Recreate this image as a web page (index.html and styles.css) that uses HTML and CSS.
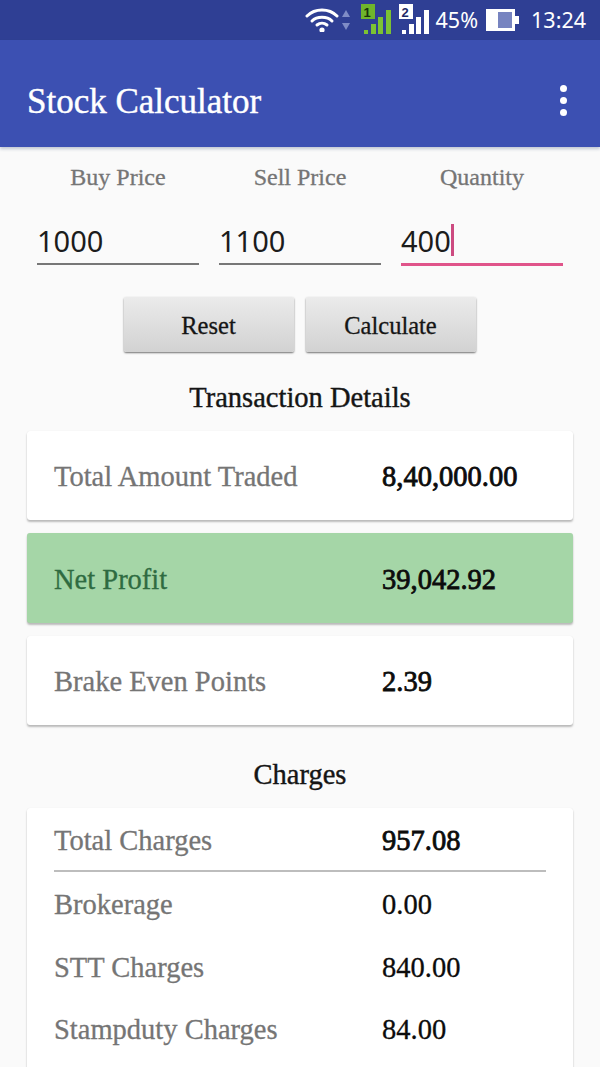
FILE: index.html
```html
<!DOCTYPE html>
<html lang="en">
<head>
<meta charset="utf-8">
<title>Stock Calculator</title>
<link rel="stylesheet" href="styles.css">
</head>
<body>
<div class="screen">
  <div class="status">
    <svg class="ic-wifi" width="34" height="26" viewBox="0 0 34 26"><g fill="none" stroke="#fff" stroke-width="3" stroke-linecap="round"><path d="M2 10C10 2 24 2 32 10"/><path d="M7 15C12 10 22 10 27 15"/><path d="M12 19C15 16.500 19 16.500 22 19"/></g><circle cx="17" cy="24" r="2.600" fill="#fff"/></svg>
    <svg class="ic-arrows" width="10" height="24" viewBox="0 0 10 24"><path d="M5 2L9 9H1Z" fill="#7f8cc6"/><path d="M5 22L9 15H1Z" fill="#7f8cc6"/></svg>
    <svg class="ic-sim" width="31" height="30" viewBox="0 0 31 30"><rect x="0" y="0" width="14" height="15" fill="#6fb52c"/><rect x="3" y="26" width="4" height="4" fill="#7cc233"/><rect x="10" y="20" width="5" height="10" fill="#7cc233"/><rect x="17" y="13" width="5" height="17" fill="#7cc233"/><rect x="25" y="6" width="5" height="24" fill="#7cc233"/></svg>
    <span class="sim-n sim-one">1</span>
    <svg class="ic-sim ic-sim2" width="31" height="30" viewBox="0 0 31 30"><rect x="0" y="0" width="14" height="15" fill="#fff"/><rect x="3" y="26" width="4" height="4" fill="#fff"/><rect x="10" y="20" width="5" height="10" fill="#fff"/><rect x="17" y="13" width="5" height="17" fill="#fff"/><rect x="25" y="6" width="5" height="24" fill="#fff"/></svg>
    <span class="sim-n sim-two">2</span>
    <span class="status-text pct">45%</span>
    <svg class="ic-batt" width="33" height="22" viewBox="0 0 33 22"><rect width="29" height="22" fill="#fff"/><rect x="12" y="3" width="14" height="16" fill="#7784c0"/><rect x="29" y="7" width="4" height="8" fill="#fff"/></svg>
    <span class="status-text clock">13:24</span>
  </div>
  <header class="appbar">
    <h1 class="title">Stock Calculator</h1>
    <div class="more"><i></i><i></i><i></i></div>
  </header>
  <main class="content">
    <section class="inputs">
      <div class="field"><div class="field-label">Buy Price</div><div class="field-value">1000</div></div>
      <div class="field"><div class="field-label">Sell Price</div><div class="field-value">1100</div></div>
      <div class="field active"><div class="field-label">Quantity</div><div class="field-value">400<span class="caret"></span></div></div>
    </section>
    <div class="buttons">
      <button class="btn">Reset</button>
      <button class="btn">Calculate</button>
    </div>
    <h2 class="heading first">Transaction Details</h2>
    <div class="card row-card"><span class="label">Total Amount Traded</span><b class="value">8,40,000.00</b></div>
    <div class="card row-card profit"><span class="label">Net Profit</span><b class="value">39,042.92</b></div>
    <div class="card row-card"><span class="label">Brake Even Points</span><b class="value">2.39</b></div>
    <h2 class="heading second">Charges</h2>
    <div class="card charges">
      <div class="charge total"><span class="label">Total Charges</span><b class="value">957.08</b></div>
      <div class="charge"><span class="label">Brokerage</span><span class="value">0.00</span></div>
      <div class="charge"><span class="label">STT Charges</span><span class="value">840.00</span></div>
      <div class="charge"><span class="label">Stampduty Charges</span><span class="value">84.00</span></div>
    </div>
  </main>
</div>
</body>
</html>
```

FILE: styles.css
```css
* { box-sizing: border-box; }
html, body { margin: 0; padding: 0; }
body { width: 600px; height: 1067px; overflow: hidden; background: #fafafa; font-family: "Liberation Serif", serif; }
.screen { height: 1067px; overflow: hidden; display: flex; flex-direction: column; }
.status { height: 40px; flex: none; background: #2f3f94; display: flex; align-items: center; justify-content: flex-end; padding-right: 14px; position: relative; }
.status-text { color: #fff; font-family: "Noto Sans", sans-serif; font-size: 21.500px; line-height: 40px; }
.ic-wifi { margin-right: 2px; margin-top: -3px; }
.ic-arrows { margin-right: 10px; margin-top: -1px; }
.ic-sim { margin-right: 7px; margin-top: -3px; }
.ic-sim2 { margin-right: 6px; }
.sim-n { position: absolute; top: 5px; width: 14px; text-align: center; font: bold 13px/15px "Liberation Sans", sans-serif; }
.sim-one { left: 360px; color: #17340a; }
.sim-two { left: 398px; color: #1e2a66; }
.ic-batt { margin: 0 12px 0 8px; }
.appbar { height: 107px; flex: none; background: #3c50b2; display: flex; align-items: center; justify-content: space-between; padding: 16px 33px 0 27px; box-shadow: 0 2px 3px rgba(60, 80, 120, .3); position: relative; z-index: 1; }
.title { margin: 0; color: #fff; font-size: 35px; font-weight: 400; -webkit-text-stroke: .4px #fff; }
.more { display: flex; flex-direction: column; gap: 5px; margin-top: -2px; }
.more i { display: block; width: 7px; height: 7px; border-radius: 50%; background: #fff; }
.content { flex: 1; padding: 0 27px; }
.inputs { display: grid; grid-template-columns: repeat(3, 162px); column-gap: 20px; padding: 15px 10px 0; }
.field-label { text-align: center; font-size: 24px; line-height: 30px; color: #757575; -webkit-text-stroke: .3px #757575; }
.field-value { margin-top: 27px; height: 46px; border-bottom: 2px solid #777; font-family: "Noto Sans", sans-serif; font-size: 29px; line-height: 44px; color: #1c1c1c; display: flex; }
.active .field-value { border-bottom: 3px solid #e0548a; height: 47px; }
.caret { width: 3px; height: 32px; margin-top: 5px; background: #cc4a80; }
.buttons { display: flex; justify-content: center; gap: 12px; margin: 31px 1px 0 0; }
.btn { width: 170px; height: 55px; padding: 2px 0 0; border: 0; border-radius: 2px; background: linear-gradient(#ebebeb, #d2d2d2); box-shadow: 0 1px 2px rgba(0, 0, 0, .55); font-family: "Liberation Serif", serif; font-size: 24.500px; color: #151515; -webkit-text-stroke: .3px #151515; }
.heading { margin: 0; text-align: center; font-size: 28.500px; font-weight: 400; line-height: 32px; color: #151515; -webkit-text-stroke: .4px #151515; }
.heading.first { margin-top: 30px; }
.heading.second { margin-top: 34px; }
.card { background: #fff; border-radius: 3px; box-shadow: 0 2px 2px rgba(0, 0, 0, .25), 0 0 1px rgba(0, 0, 0, .1); }
.row-card { height: 89px; display: flex; align-items: center; padding: 3px 0 0 27px; margin-bottom: 13px; }
.heading.first + .row-card { margin-top: 17px; }
.profit { background: #a5d6a7; height: 90px; }
.profit .label { color: #2f6b41; -webkit-text-stroke-color: #2f6b41; }
.label { width: 328px; flex: none; font-size: 28.500px; color: #757575; -webkit-text-stroke: .3px #757575; }
.value { font-size: 28.500px; color: #0c0c0c; font-weight: 400; -webkit-text-stroke: .3px #0c0c0c; }
b.value { -webkit-text-stroke: .8px #0c0c0c; }
.charges { margin-top: 17px; height: 300px; padding: 0 27px; }
.charge { height: 62.500px; display: flex; align-items: center; }
.charge.total { height: 64px; padding-top: 4px; margin-bottom: 2px; border-bottom: 2px solid #bdbdbd; }
```
